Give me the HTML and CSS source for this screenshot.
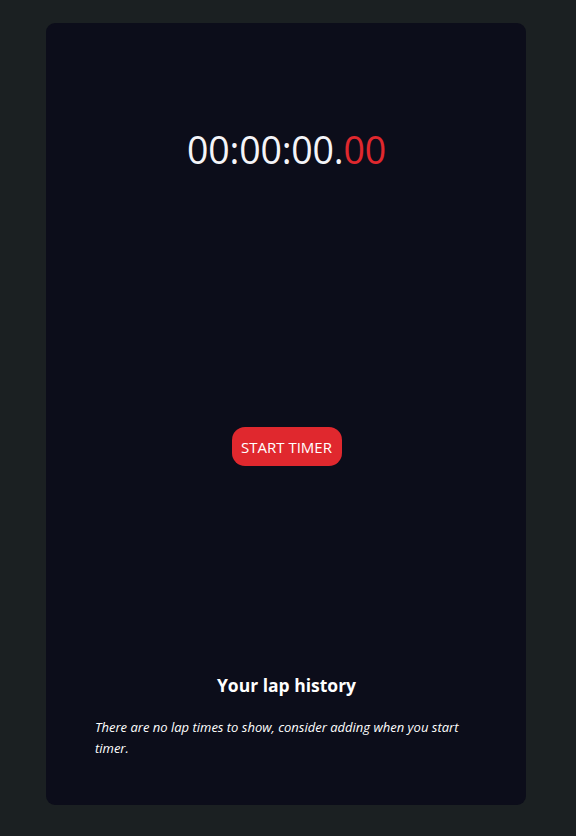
FILE: index.html
```html
<!DOCTYPE html>
<html lang="en">
<head>
<meta charset="utf-8">
<title>Stopwatch</title>
<link rel="stylesheet" href="styles.css">
</head>
<body>
<main class="card">
  <section class="timer">
    <span class="time">00:00:00.</span><span class="ms">00</span>
  </section>
  <div class="controls">
    <button class="start-btn" type="button">START TIMER</button>
  </div>
  <section class="laps">
    <h2 class="laps-title">Your lap history</h2>
    <p class="laps-empty">There are no lap times to show, consider adding when you start timer.</p>
  </section>
</main>
</body>
</html>
```

FILE: styles.css
```css
* { box-sizing: border-box; }
html, body { margin: 0; padding: 0; }
body {
  background: #1b2022;
  font-family: "Open Sans", "Noto Sans", sans-serif;
  color: #ffffff;
  padding: 23px 0 31px;
}
.card {
  width: 480px;
  height: 782px;
  margin: 0 0 0 46px;
  background: #0c0d1a;
  border-radius: 9px;
  display: flex;
  flex-direction: column;
  padding: 0 48px 46px 49px;
}
.timer {
  margin-top: 102px;
  text-align: center;
  font-size: 37.5px;
  line-height: 50px;
  font-weight: 400;
  letter-spacing: -0.2px;
}
.time { color: #f4f4f8; }
.ms { color: #e0282e; }
.controls {
  margin-top: 252px;
  display: flex;
  justify-content: center;
}
.start-btn {
  background: #e0282e;
  color: #ffffff;
  border: none;
  border-radius: 13px;
  width: 110px;
  height: 39px;
  font-family: inherit;
  font-size: 15px;
  padding: 0;
}
.laps {
  margin-top: auto;
}
.laps-title {
  margin: 0 0 20px;
  text-align: center;
  font-size: 17.5px;
  font-weight: 700;
  line-height: 24px;
}
.laps-empty {
  margin: 0;
  font-style: italic;
  font-size: 13px;
  line-height: 21px;
}
```
